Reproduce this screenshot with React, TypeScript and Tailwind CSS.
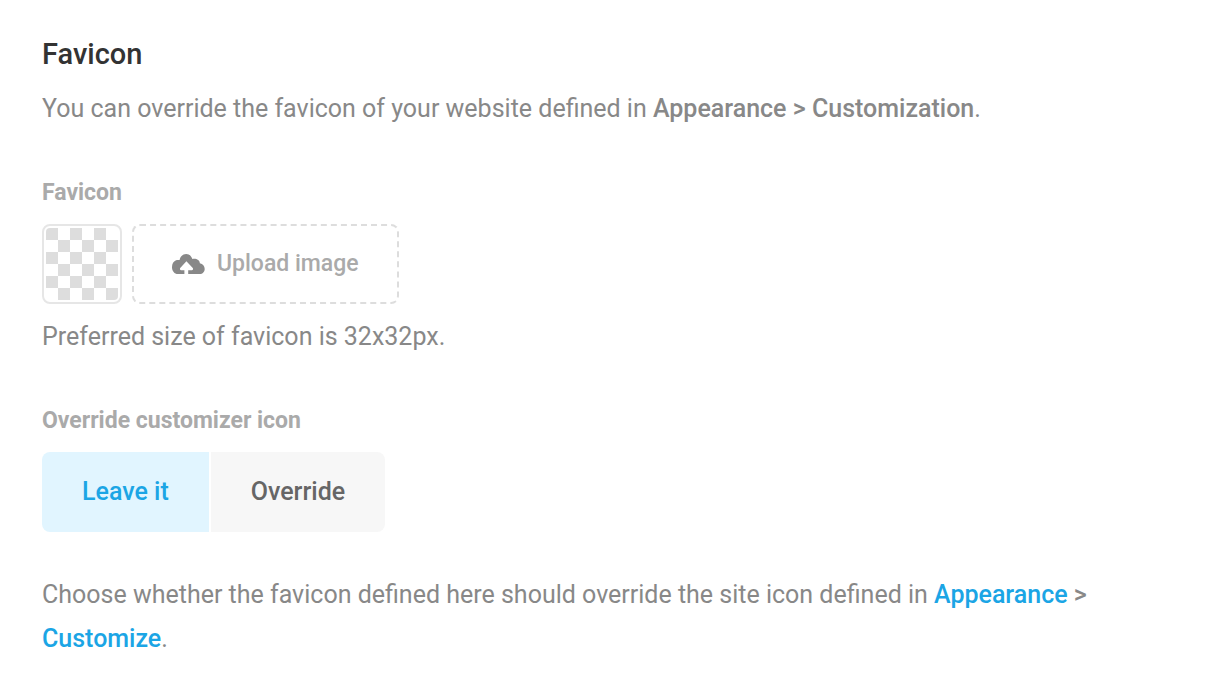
import { useState } from 'react';

const iconOptions = [
    { value: 'leave', label: 'Leave it' },
    { value: 'override', label: 'Override' },
];

// Solid cloud with the arrow cut out down to its bottom edge
function CloudUploadIcon() {
    return (
        <svg viewBox="0 0 33 20" className="h-5 w-[33px] shrink-0 fill-[#888]" aria-hidden="true">
            <path d="M5.800 20C2.500 20 0 17 0 13.200 0 9.500 1.600 7.200 3.600 6.400 5 5.800 6.500 5.800 7.600 6 8.300 2.400 10.800 0 14.200 0 17.200 0 19.300 1.900 20.400 5.100 24 4.200 27.600 6 27.900 9.200 30.800 9.900 32.700 12.200 32.700 15 32.700 17.900 30.600 20 27.800 20H16.200V16.300H20Q21.300 16.300 21 14.300L14.400 7.200 8 14.300Q7.700 16.300 9 16.300H12.400V20Z" />
        </svg>
    );
}

// Empty preview tile: 12px checkerboard
function ImagePreview() {
    return (
        <div className="h-20 w-20 shrink-0 rounded-lg border-2 border-[#e6e6e6] bg-white p-[2px]">
            <div className="h-full w-full rounded bg-[conic-gradient(#fff_25%,#ddd_0_50%,#fff_0_75%,#ddd_0)] bg-[length:24px_24px]" />
        </div>
    );
}

export default function App() {
    const [selected, setSelected] = useState('leave');

    return (
        <main className="min-h-screen bg-white px-[42px] py-8 font-[Roboto,sans-serif] text-[25px] leading-[44px] text-[#888]">
            <section>
                <h1 className="text-[29px] font-medium text-[#333]">Favicon</h1>
                <p className="mt-[11px]">
                    You can override the favicon of your website defined in{' '}
                    <span className="font-medium">Appearance &gt; Customization</span>.
                </p>
            </section>

            <section className="mt-10">
                <h2 className="text-[23px] font-bold text-[#aaa]">Favicon</h2>
                <div className="mt-[9px] flex gap-[10px]">
                    <ImagePreview />
                    <button
                        type="button"
                        className="flex h-20 items-center gap-3 rounded-lg border-2 border-dashed border-[#ddd] px-[38px] text-[23px] font-medium text-[#aaa]"
                    >
                        <CloudUploadIcon />
                        Upload image
                    </button>
                </div>
                <p className="mt-[11px]">Preferred size of favicon is 32x32px.</p>
            </section>

            <section className="mt-10">
                <h2 className="text-[23px] font-bold text-[#aaa]">Override customizer icon</h2>
                <div className="mt-[9px] flex w-fit gap-[2px] overflow-hidden rounded-lg">
                    {iconOptions.map((option) => (
                        <button
                            key={option.value}
                            type="button"
                            aria-pressed={selected === option.value}
                            onClick={() => setSelected(option.value)}
                            className={`h-20 px-10 font-medium ${
                                selected === option.value ? 'bg-[#e1f5ff] text-[#1ba5e5]' : 'bg-[#f7f7f7] text-[#666]'
                            }`}
                        >
                            {option.label}
                        </button>
                    ))}
                </div>
                <p className="mt-[41px]">
                    Choose whether the favicon defined here should override the site icon defined in{' '}
                    <span className="font-medium">
                        <a href="#appearance" className="text-[#1ba5e5]">Appearance</a> &gt;{' '}
                        <a href="#customize" className="text-[#1ba5e5]">Customize</a>
                    </span>
                    .
                </p>
            </section>
        </main>
    );
}
